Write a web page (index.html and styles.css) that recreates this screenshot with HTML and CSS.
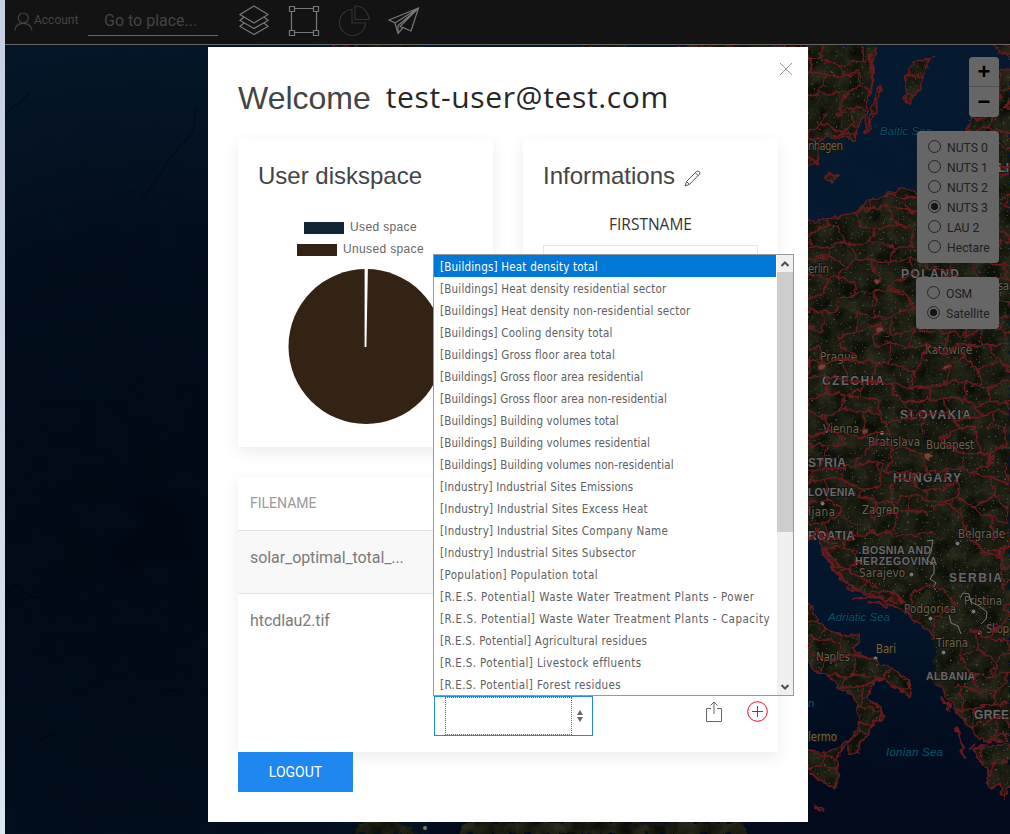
FILE: index.html
```html
<!DOCTYPE html>
<html lang="en">
<head>
<meta charset="utf-8">
<title>Account</title>
<link rel="stylesheet" href="styles.css">
</head>
<body>
<div class="app">
  <svg class="map" viewBox="5 45 1005 789" width="1005" height="789">
    <defs>
      <radialGradient id="deep" gradientUnits="userSpaceOnUse" cx="150" cy="540" r="560">
        <stop offset="0" stop-color="#010814"/><stop offset=".5" stop-color="#020c1a"/><stop offset="1" stop-color="#06192c"/>
      </radialGradient>
      <linearGradient id="east" x1="0" x2="0" y1="0" y2="1">
        <stop offset="0" stop-color="#051a31"/><stop offset=".7" stop-color="#04162c"/><stop offset=".86" stop-color="#020d20"/><stop offset="1" stop-color="#020a1b"/>
      </linearGradient>
      <filter id="relief" x="0" y="0" width="1" height="1" color-interpolation-filters="sRGB">
        <feTurbulence type="fractalNoise" baseFrequency=".022 .03" numOctaves="5" seed="8"/>
        <feColorMatrix values="0 0 0 0 .02  0 0 0 0 .09  0 0 0 0 .16  1.6 0 0 0 -.65"/>
      </filter>
      <filter id="soil" x="0" y="0" width="1" height="1" color-interpolation-filters="sRGB">
        <feTurbulence type="fractalNoise" baseFrequency=".06" numOctaves="5" seed="4"/>
        <feColorMatrix values=".2 0 0 0 0  .18 0 0 0 .018  .14 0 0 0 -.005  0 0 0 0 1"/>
      </filter>
      <filter id="towns" x="0" y="0" width="1" height="1" color-interpolation-filters="sRGB">
        <feTurbulence type="fractalNoise" baseFrequency=".42" numOctaves="2" seed="17"/>
        <feColorMatrix values="0 0 0 0 .27  0 0 0 0 .34  0 0 0 0 .27  10 0 0 0 -6.8"/>
      </filter>
      <filter id="rough" filterUnits="userSpaceOnUse" x="5" y="45" width="1005" height="789" color-interpolation-filters="sRGB">
        <feTurbulence type="fractalNoise" baseFrequency=".12" numOctaves="2" seed="3"/>
        <feDisplacementMap in="SourceGraphic" scale="9" xChannelSelector="R" yChannelSelector="G"/>
      </filter>
      <path id="land" d="M800 40H878L874 55L873 70L872 85L868 100L865 119L860 124L854 140L840 137L824 137L818 150L818 163L800 168Z
        M880 85L882 90L872 120L866 133L864 130L871 110Z
        M915 63L932 58L925 70L920 82L922 87L908 103L904 100L906 90L905 80L910 70Z
        M827 172L837 177L833 183L826 178Z
        M988 40L998 50L1014 60V40Z
        M800 214L817 223L839 216L860 210L867 202L877 198L897 190L910 188L917 195L930 202L950 190L965 170L969 117L980 120L998 112L1000 72L1014 70V743L980 740L963 720L950 703L943 690L933 683L935 650L933 637L927 630L907 613L883 601L857 590L840 578L833 563L820 543L818 530L808 540L800 530Z
        M800 590L808 602L820 623L833 632L847 635L860 635L860 642L853 645L855 652L870 658L890 668L903 677L913 688L911 698L900 690L882 678L870 687L868 698L880 707L883 718L870 727L868 735L860 743L858 753L848 752L848 743L855 733L860 720L855 700L850 692L842 690L833 680L827 672L818 673L813 665L800 660Z
        M800 749L827 752L848 742L838 757L837 767L840 778L835 788L823 782L800 766Z
        M973 750L984 744L1014 746V779L1003 797L1000 783L992 788L987 783L987 770Z
        M815 805L823 809L823 813L817 809Z
        M352 840L358 822H398L410 828L424 840Z
        M456 840L466 822H742L748 840Z
        M335 40H420V49H335ZM582 40H625V49H582ZM680 40H808V49H680Z"/>
      <clipPath id="landClip"><use href="#land"/></clipPath>
      <mask id="outer" maskUnits="userSpaceOnUse" x="5" y="45" width="1005" height="789">
        <path fill="#fff" d="M5 45H1010V820H5Z"/>
        <path fill="#000" d="M852 537L875 535L922 533L924 512L948 503L963 514L968 536L985 554L1003 558L1002 625L975 626L960 640L966 668L948 695L925 690L925 640L900 603L870 580Z"/>
      </mask>
      <mask id="coast" maskUnits="userSpaceOnUse" x="5" y="45" width="1005" height="789">
        <path fill="#fff" d="M5 45H1010V820H5Z"/>
        <path fill="#000" d="M924 640H950V686H924ZM5 49H808V834H5Z"/>
      </mask>
    </defs>
    <path fill="url(#deep)" d="M5 45H808V834H5Z"/>
    <path fill="url(#east)" d="M430 45H1010V834H430Z"/>
    <path filter="url(#relief)" opacity=".3" d="M5 45H1010V834H5Z"/>
    <path class="trench" d="M195 108q2 20-8 31l-17 19-15 24-13 17M5 118q5-10 16-16l8-9M19 603q15-10 32-3M35 655l12-11 13-9M170 523q20-12 38-10M5 592l11-7 17 12M162 692l17-3M40 740l14-7"/>
    <g filter="url(#rough)">
      <g clip-path="url(#landClip)"><path filter="url(#soil)" d="M5 45H1010V834H5Z"/></g>
    </g>
    <g clip-path="url(#landClip)"><path filter="url(#towns)" opacity=".8" d="M800 45H1010V834H800Z"/></g>
    <g class="sea-name">
      <text x="880" y="135" textLength="52">Baltic Sea</text><text x="828" y="621" textLength="62">Adriatic Sea</text>
      <text x="886" y="756" textLength="57">Ionian Sea</text><text x="808" y="707">n</text>
    </g>
    <g class="country">
      <text x="901" y="278" textLength="58">POLAND</text><text x="822" y="385" textLength="62">CZECHIA</text>
      <text x="900" y="419" textLength="71">SLOVAKIA</text><text x="893" y="482" textLength="68">HUNGARY</text>
      <text x="808" y="467" textLength="38">STRIA</text><text x="808" y="496" textLength="47" class="small">LOVENIA</text>
      <text x="808" y="540" textLength="47">ROATIA</text><text x="862" y="554" textLength="69" class="small">BOSNIA AND</text>
      <text x="855" y="565" textLength="82" class="small">HERZEGOVINA</text><text x="949" y="582" textLength="53">SERBIA</text>
      <text x="926" y="680" textLength="49" class="small">ALBANIA</text><text x="974" y="719" textLength="35">GREE</text>
      <text x="998" y="172" textLength="11">LI</text>
    </g>
    <g class="city">
      <text x="808" y="150" textLength="35">nhagen</text><text x="808" y="273" textLength="21">erlin</text><text x="998" y="290" textLength="11">sa</text>
      <text x="820" y="361" textLength="37">Prague</text><text x="925" y="354" textLength="47">Katowice</text>
      <text x="823" y="433" textLength="36">Vienna</text><text x="868" y="446" textLength="52">Bratislava</text><text x="926" y="449" textLength="48">Budapest</text>
      <text x="808" y="516" textLength="27">ljana</text><text x="862" y="514" textLength="37">Zagreb</text><text x="958" y="538" textLength="47">Belgrade</text>
      <text x="859" y="577" textLength="46">Sarajevo</text><text x="904" y="613" textLength="52">Podgorica</text><text x="964" y="605" textLength="38">Pristina</text>
      <text x="986" y="633" textLength="23">Skop</text><text x="936" y="647" textLength="32">Tirana</text><text x="876" y="653" textLength="20">Bari</text>
      <text x="816" y="661" textLength="34">Naples</text><text x="808" y="741" textLength="29">lermo</text>
    </g>
    <g class="dot"><circle cx="911.500" cy="574.500" r="2.500"/><circle cx="957.500" cy="543.500" r="2.500"/><circle cx="882" cy="433" r="2.500"/><circle cx="822.500" cy="503.500" r="2.500"/><circle cx="930.500" cy="618.500" r="2.500"/><circle cx="973.500" cy="611.500" r="2.500"/><circle cx="979.500" cy="632.500" r="2.500"/><circle cx="943.500" cy="652.500" r="2.500"/><circle cx="875.500" cy="658.500" r="2.500"/><circle cx="425" cy="828" r="2.500"/></g>
    <path class="frontier" d="M927 541l6-1-2 12-4 8 7 5 0 8-4 6 6 4-3 4 3 3M960 598l3-5 6 1 2 8 8 4 8 6-1 7-5 5M949 615l2 8 7 3 3 8"/>
    <g filter="url(#rough)">
      <use href="#land" class="coast" mask="url(#coast)"/>
      <g mask="url(#outer)"><g clip-path="url(#landClip)"><path id="regions" class="regions"/></g></g>
      <path class="regions" d="M852 537L875 532L900 537L922 533L935 532M924 512L948 503L963 514L968 536L985 554L1001 558L1004 545M1002 560V590M912 600L918 588L928 584L943 590L956 605L945 613L935 617L933 636M907 613L913 600M966 640L960 655L968 666"/>
      <path class="isles" d="M820 547l10 17 14 13M824 547l16 20 28 15M846 588l12 4M852 598l20-2 25 6M868 592l20-1 15 11M870 603l18 3M823 535l4 10M941 697l9 13M958 728l5 20M961 748l5 10M813 807l8 5M970 748l8-6M870 55v18M872 65v25M855 134l-20 1"/>
    </g>
    <g class="metro"><path d="M874 280l3-1 3 2-2 3-3-1ZM876 328l6-1 2 3-7 3ZM818 366l4-2 4 1-2 4-5 1ZM862 430l6-1-1 4-4 1ZM924 454l5-1 4 3-4 2 0 3-4-3ZM942 369l3-3 7-1-3 2-4 2ZM924 360l4 1"/></g>
  </svg>

  <header class="topbar">
    <div class="account"><svg width="19" height="20" viewBox="0 0 19 20"><circle cx="9.300" cy="6" r="5"/><path d="M.7 18.500C1.300 13.500 5 11.300 9.300 11.300S17.300 13.500 18 18.500"/></svg><span>Account</span></div>
    <div class="search">Go to place...</div>
    <div class="tools">
      <svg width="32" height="32" viewBox="0 0 32 32"><path d="M16 2L30 10.500 16 19 2 10.500ZM6 13L2 16.500 16 24.500 30 16.500 26 13M6 19L2 22.500 16 30.500 30 22.500 26 19"/></svg>
      <svg width="32" height="32" viewBox="0 0 32 32"><path d="M6 4.500H26M6 28.500H26M3.500 7V26M28.500 7V26M1.500 2.500h5v5h-5ZM25.500 2.500h5v5h-5ZM1.500 26.500h5v5h-5ZM25.500 26.500h5v5h-5Z"/></svg>
      <svg class="muted" width="32" height="32" viewBox="0 0 32 32"><path d="M14 5.500A13 13 0 1 0 27.500 19H14ZM17 2V15.500H31A14 14 0 0 0 17 2Z"/></svg>
      <svg width="32" height="32" viewBox="0 0 32 32"><path d="M30.500 4L1 16 7 19 10 29.500 15 23.500 23 27ZM30.500 4L7 19M30.500 4L10 21.500V29M30.500 4L12 22.500 15 23.500"/></svg>
    </div>
  </header>

  <div class="zoom-control"><button>+</button><button>−</button></div>
  <div class="layer-control levels">
    <label><i class="radio"></i><span>NUTS 0</span></label><label><i class="radio"></i><span>NUTS 1</span></label><label><i class="radio"></i><span>NUTS 2</span></label><label><i class="radio on"></i><span>NUTS 3</span></label><label><i class="radio"></i><span>LAU 2</span></label><label><i class="radio"></i><span>Hectare</span></label>
  </div>
  <div class="layer-control base"><label><i class="radio"></i><span>OSM</span></label><label><i class="radio on"></i><span>Satellite</span></label></div>

  <main class="modal">
    <svg class="close" width="14" height="14" viewBox="0 0 14 14"><path d="M1 1L13 13M13 1L1 13"/></svg>
    <h1>Welcome <span class="email">test-user@test.com</span></h1>
    <div class="cards">
      <section class="card">
        <h2>User diskspace</h2>
        <div class="legend"><div><i class="swatch used"></i>Used space</div><div><i class="swatch unused"></i>Unused space</div></div>
        <svg class="pie" width="156" height="156" viewBox="0 0 156 156"><circle cx="78" cy="78.500" r="77.500"/><path d="M77.500 79V0M77.500 79L79 0"/></svg>
      </section>
      <section class="card">
        <h2>Informations <svg class="pencil" width="17" height="17" viewBox="0 0 17 17"><path d="M1 16L2.500 11.500 12.500 1.500Q14 .5 15.200 1.500T15.500 4.200L5.500 14.300ZM2.500 11.500L5.500 14.300M11.300 2.800L14.200 5.500"/></svg></h2>
        <div class="field"><div class="field-label">FIRSTNAME</div><div class="field-input"></div></div>
      </section>
    </div>
    <section class="files">
      <div class="files-head">FILENAME</div>
      <div class="files-row odd"><span>solar_optimal_total_...</span></div>
      <div class="files-row last">
        <span>htcdlau2.tif</span>
        <div class="select">
          <div class="select-value"></div>
          <svg width="6" height="12" viewBox="0 0 6 12"><path d="M0 5L3 0 6 5ZM0 7L3 12 6 7Z"/></svg>
          <div class="menu">
            <ul>
              <li class="active">[Buildings] Heat density total</li><li>[Buildings] Heat density residential sector</li><li>[Buildings] Heat density non-residential sector</li><li>[Buildings] Cooling density total</li><li>[Buildings] Gross floor area total</li><li class="tight">[Buildings] Gross floor area residential</li><li class="tight">[Buildings] Gross floor area non-residential</li><li class="tight">[Buildings] Building volumes total</li><li class="tight">[Buildings] Building volumes residential</li><li class="tight">[Buildings] Building volumes non-residential</li><li>[Industry] Industrial Sites Emissions</li><li class="wide">[Industry] Industrial Sites Excess Heat</li><li class="wide">[Industry] Industrial Sites Company Name</li><li class="wide">[Industry] Industrial Sites Subsector</li><li class="res">[Population] Population total</li><li class="plant">[R.E.S. Potential] Waste Water Treatment Plants - Power</li><li class="plant">[R.E.S. Potential] Waste Water Treatment Plants - Capacity</li><li class="wide">[R.E.S. Potential] Agricultural residues</li><li class="res">[R.E.S. Potential] Livestock effluents</li><li class="res">[R.E.S. Potential] Forest residues</li>
            </ul>
            <div class="scrollbar">
              <svg width="8" height="6" viewBox="0 0 8 6"><path d="M.5 5L4 1.500 7.500 5"/></svg>
              <div class="thumb"></div>
              <svg width="8" height="6" viewBox="0 0 8 6"><path d="M.5 1L4 4.500 7.500 1"/></svg>
            </div>
          </div>
        </div>
        <div class="actions">
          <svg width="16" height="21" viewBox="0 0 16 21"><path d="M5 7.500H.5V20.500H15.500V7.500H11M8 1V13M4.500 4.500L8 1 11.500 4.500"/></svg>
          <svg class="add" width="21" height="21" viewBox="0 0 21 21"><circle cx="10.500" cy="10.500" r="9.800"/><path d="M10.500 5V16M5 10.500H16"/></svg>
        </div>
      </div>
    </section>
    <button class="logout">LOGOUT</button>
  </main>
</div>
<script src="map.js"></script>
</body>
</html>
```

FILE: styles.css
```css
* { box-sizing: border-box; }
body { margin: 0; width: 1010px; height: 834px; overflow: hidden; background: linear-gradient(#c5cfe2, #dce6f1); font-family: Roboto, "Liberation Sans", sans-serif; color: #666; }
svg { display: block; fill: none; }
.app { position: relative; height: 834px; margin-left: 5px; }
.map { position: absolute; left: 0; top: 45px; }
.trench { stroke: #000410; stroke-width: 1.5; opacity: .4; }
.coast { fill: none; stroke: #661b1e; stroke-width: 1.7; }
.regions { fill: none; stroke: #661b1e; stroke-width: 1.7; }
.isles { fill: none; stroke: #661b1e; stroke-width: 2.5; }
.frontier { stroke: #777; stroke-width: 1; }
.metro { fill: #6b4938; stroke: #722322; }
.dot { fill: #777; stroke: #111; }
.sea-name { font: italic 11.5px "Liberation Sans", sans-serif; fill: #075268; stroke: #031322; stroke-width: 2px; paint-order: stroke; }
.country { font: bold 12px "Liberation Sans", sans-serif; fill: #686868; stroke: #151515; stroke-width: 2px; paint-order: stroke; }
.country .small { font-size: 10.5px; }
.city { font: 11.5px "DejaVu Sans Condensed", "DejaVu Sans", sans-serif; fill: #6b634f; stroke: #11140e; stroke-width: 2px; paint-order: stroke; }

.topbar { position: relative; height: 45px; background: #131313; border-bottom: 1px solid #666; display: flex; align-items: flex-start; color: #444; }
.topbar svg { stroke: #777; stroke-width: 1.2; }
.account { display: flex; gap: 1px; width: 83px; padding: 12px 0 0 9px; font-size: 12px; line-height: 16px; }
.topbar .account svg { stroke: #444; }
.account span { white-space: nowrap; }
.search { width: 130px; height: 36px; border-bottom: 1px solid #666; padding-left: 16px; font-size: 16px; line-height: 41px; }
.tools { display: flex; gap: 18px; padding: 4px 0 0 19.5px; }
.topbar .muted { stroke: #333; }

.zoom-control { position: absolute; right: 11px; top: 57px; width: 30px; height: 60px; background: #666; border-radius: 4px; overflow: hidden; }
.zoom-control button { display: block; width: 30px; height: 30px; padding: 0; border: 0; background: none; color: #000; font: bold 22px/30px "Liberation Sans", sans-serif; }
.zoom-control button:first-child { border-bottom: 1px solid #515151; }
.layer-control { position: absolute; right: 11px; background: #666; border-radius: 4px; color: #202020; font-size: 12.2px; }
.levels { top: 131px; width: 82px; height: 132px; padding: 6px 0 0 11px; }
.base { top: 277px; width: 83px; height: 52px; padding: 6px 0 0 11px; }
.layer-control label { display: flex; align-items: center; height: 20px; gap: 6px; white-space: nowrap; line-height: 16px; }
.layer-control span { padding-top: 2px; }
.radio { flex: none; width: 13px; height: 13px; margin-top: -1px; border: 1px solid #252525; border-radius: 50%; }
.radio.on { background: radial-gradient(#151515 0 3.3px, transparent 4px); }

.modal { position: absolute; left: 203px; top: 47px; width: 600px; height: 775px; background: #fff; padding: 30px; }
.close { position: absolute; right: 15px; top: 15px; stroke: #999; }
h1, h2 { margin: 0; font-weight: 400; color: #444; font-family: "Liberation Sans", Arial, sans-serif; }
h1 { display: flex; align-items: flex-start; gap: 15px; height: 62px; font-size: 32px; line-height: 42px; white-space: nowrap; }
.email { font-family: "Open Sans", "Noto Sans", sans-serif; font-size: 30px; line-height: 40px; letter-spacing: .65px; color: #262626; }
.cards { display: grid; grid-template-columns: 1fr 1fr; gap: 30px; }
.card { height: 308px; padding: 20px; background: #fff; box-shadow: 0 5px 15px rgba(0,0,0,.08); }
h2 { display: flex; gap: 9px; font-size: 24px; line-height: 33px; }
.pencil { margin-top: 11px; stroke: #555; }
.legend { padding: 24px 10px 0 0; font: 12px/22px "Liberation Sans", Arial, sans-serif; letter-spacing: .35px; }
.legend div { display: flex; align-items: center; justify-content: center; gap: 6px; height: 22px; }
.swatch { width: 40px; height: 12px; margin-top: 2px; }
.used { background: #132433; }
.unused { background: #332314; }
.pie { margin: 8px 0 0 30px; }
.pie circle { fill: #332314; }
.pie path { stroke: #fff; stroke-width: 1.8; }
.field { padding-top: 20px; }
.field-label { text-align: center; font: 15.5px/24px "Open Sans", "Noto Sans", sans-serif; color: #333; height: 33px; }
.field-input { height: 40px; border: 1px solid #e5e5e5; }

.files { margin-top: 30px; height: 275px; background: #fff; box-shadow: 0 5px 15px rgba(0,0,0,.08); }
.files-head { height: 53px; padding: 16px 12px; font-size: 14px; line-height: 21px; color: #999; }
.files-row { display: grid; grid-template-columns: 184px 159px 1fr; height: 63px; border-top: 1px solid #e5e5e5; padding: 15px 12px; font-size: 16px; letter-spacing: -.08px; line-height: 23px; color: #7b7b7b; }
.odd { background: #f8f8f8; }
.last { height: 159px; align-content: stretch; }
.select { position: relative; align-self: end; height: 40px; display: flex; align-items: center; border: 1px solid #1e87f0; padding: 0 9px 0 10px; gap: 5px; margin-bottom: 1px; }
.select-value { width: 128px; height: 38px; border: 1px dotted #666; }
.select svg { fill: #666; }
.select > svg { margin-top: -1px; }
.actions { align-self: end; justify-self: end; display: flex; gap: 25px; margin: 0 -1.5px 15px 0; }
.actions svg { stroke: #666; stroke-width: 1; }
.actions .add { stroke: #f00b20; }
.menu { position: absolute; left: -2px; bottom: 39px; width: 361px; height: 442px; display: flex; background: #fff; border: 1px solid #999; }
.menu ul { margin: 0; padding: 0; list-style: none; width: 342px; font: 11.5px/24px "DejaVu Sans Condensed", "DejaVu Sans", sans-serif; letter-spacing: .21px; color: #606060; }
.menu li { height: 22px; padding-left: 6px; white-space: nowrap; }
.menu .tight { letter-spacing: .12px; }
.menu .wide { letter-spacing: .27px; }
.menu .res { letter-spacing: .38px; }
.menu .plant { letter-spacing: .5px; }
.menu .active { background: #0078d7; color: #fff; }
.menu .scrollbar { margin-left: 1px; width: 16px; display: flex; flex-direction: column; align-items: center; background: #f0f0f0; padding: 6px 0 5px; }
.scrollbar svg { fill: none; stroke: #505050; stroke-width: 2; }
.thumb { width: 16px; height: 260px; margin: 5px 0 auto; background: #cdcdcd; }
.logout { display: block; width: 115px; height: 40px; padding: 0; border: 0; background: #1e87f0; color: #fff; font: 14px/40px Roboto, sans-serif; }
```

FILE: map.js
```js
// Builds an irregular network of administrative regions across the land area.
(function () {
  var seed = 29;
  function rnd() {
    seed = (seed * 16807) % 2147483647;
    return seed / 2147483647 - 0.5;
  }
  var step = 17, rows = 46, cols = 15, pts = [], d = '';
  for (var r = 0; r < rows; r++) {
    pts.push([]);
    for (var c = 0; c < cols; c++) {
      pts[r].push([(790 + c * step + rnd() * 14).toFixed(1), (42 + r * step + rnd() * 14).toFixed(1)]);
    }
  }
  for (r = 0; r < rows - 1; r++) {
    for (c = 0; c < cols - 1; c++) {
      if (rnd() < 0.4) d += 'M' + pts[r][c] + 'L' + pts[r][c + 1];
      if ((r + c) % 2 === 0) d += 'M' + pts[r][c] + 'L' + pts[r + 1][c];
    }
  }
  document.getElementById('regions').setAttribute('d', d);
})();
```
